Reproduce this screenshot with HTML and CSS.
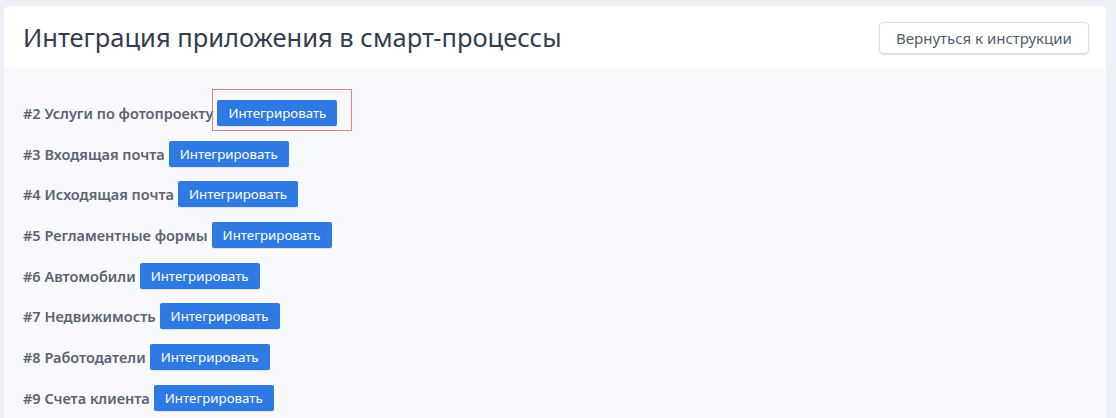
FILE: index.html
```html
<!DOCTYPE html>
<html lang="ru">
<head>
<meta charset="utf-8">
<link rel="stylesheet" href="styles.css">
</head>
<body>
<div class="card">
  <div class="card-header">
    <h1 class="title">Интеграция приложения в смарт-процессы</h1>
    <button class="btn-back">Вернуться к инструкции</button>
  </div>
  <div class="card-body">
    <div class="row"><span class="label">#2 Услуги по фотопроекту</span><span class="highlight"><button class="btn-int">Интегрировать</button></span></div>
    <div class="row"><span class="label">#3 Входящая почта</span><button class="btn-int">Интегрировать</button></div>
    <div class="row"><span class="label">#4 Исходящая почта</span><button class="btn-int">Интегрировать</button></div>
    <div class="row"><span class="label">#5 Регламентные формы</span><button class="btn-int">Интегрировать</button></div>
    <div class="row"><span class="label">#6 Автомобили</span><button class="btn-int">Интегрировать</button></div>
    <div class="row"><span class="label">#7 Недвижимость</span><button class="btn-int">Интегрировать</button></div>
    <div class="row"><span class="label">#8 Работодатели</span><button class="btn-int">Интегрировать</button></div>
    <div class="row"><span class="label">#9 Счета клиента</span><button class="btn-int">Интегрировать</button></div>
  </div>
</div>
</body>
</html>
```
FILE: styles.css
```css
html, body {
  margin: 0;
  padding: 0;
  background: #edf0f7;
  font-family: "Noto Sans", "Open Sans", sans-serif;
  overflow: hidden;
}
body {
  padding: 6px 10px 0 4px;
  height: 418px;
  box-sizing: border-box;
}
.card {
  background: #f8f9fd;
  border-radius: 6px 6px 0 0;
  overflow: hidden;
  height: 100%;
}
.card-header {
  background: #ffffff;
  height: 62px;
  display: flex;
  align-items: center;
  justify-content: space-between;
  padding: 0 17px 0 19px;
  box-sizing: border-box;
}
.title {
  margin: 0;
  font-size: 25.5px;
  font-weight: 400;
  color: #333d4d;
}
.btn-back {
  font-family: inherit;
  font-size: 15px;
  color: #535c69;
  background: #fff;
  border: 1px solid #dcdfe4;
  border-radius: 4px;
  height: 32px;
  width: 210px;
  padding: 0;
  box-shadow: 0 1px 2px rgba(0,0,0,0.12);
  margin-top: 2px;
}
.card-body {
  padding: 32px 19px 0 19px;
  display: flex;
  flex-direction: column;
  gap: 14.7px;
}
.row {
  display: flex;
  align-items: center;
  height: 26px;
}
.label {
  font-size: 14.5px;
  font-weight: 600;
  color: #5a6371;
  margin-right: 4px;
}
.highlight {
  position: relative;
  display: flex;
}
.highlight::after {
  content: "";
  position: absolute;
  left: -5px;
  top: -11px;
  right: -15px;
  bottom: -5px;
  border: 1px solid #f07c7c;
}
.btn-int {
  font-family: inherit;
  font-size: 13.3px;
  color: #ffffff;
  background: #2f7ae2;
  border: none;
  border-radius: 2px;
  height: 26px;
  width: 120px;
  padding: 0;
  box-shadow: 0 1px 1px rgba(0,0,0,0.1);
}
```
